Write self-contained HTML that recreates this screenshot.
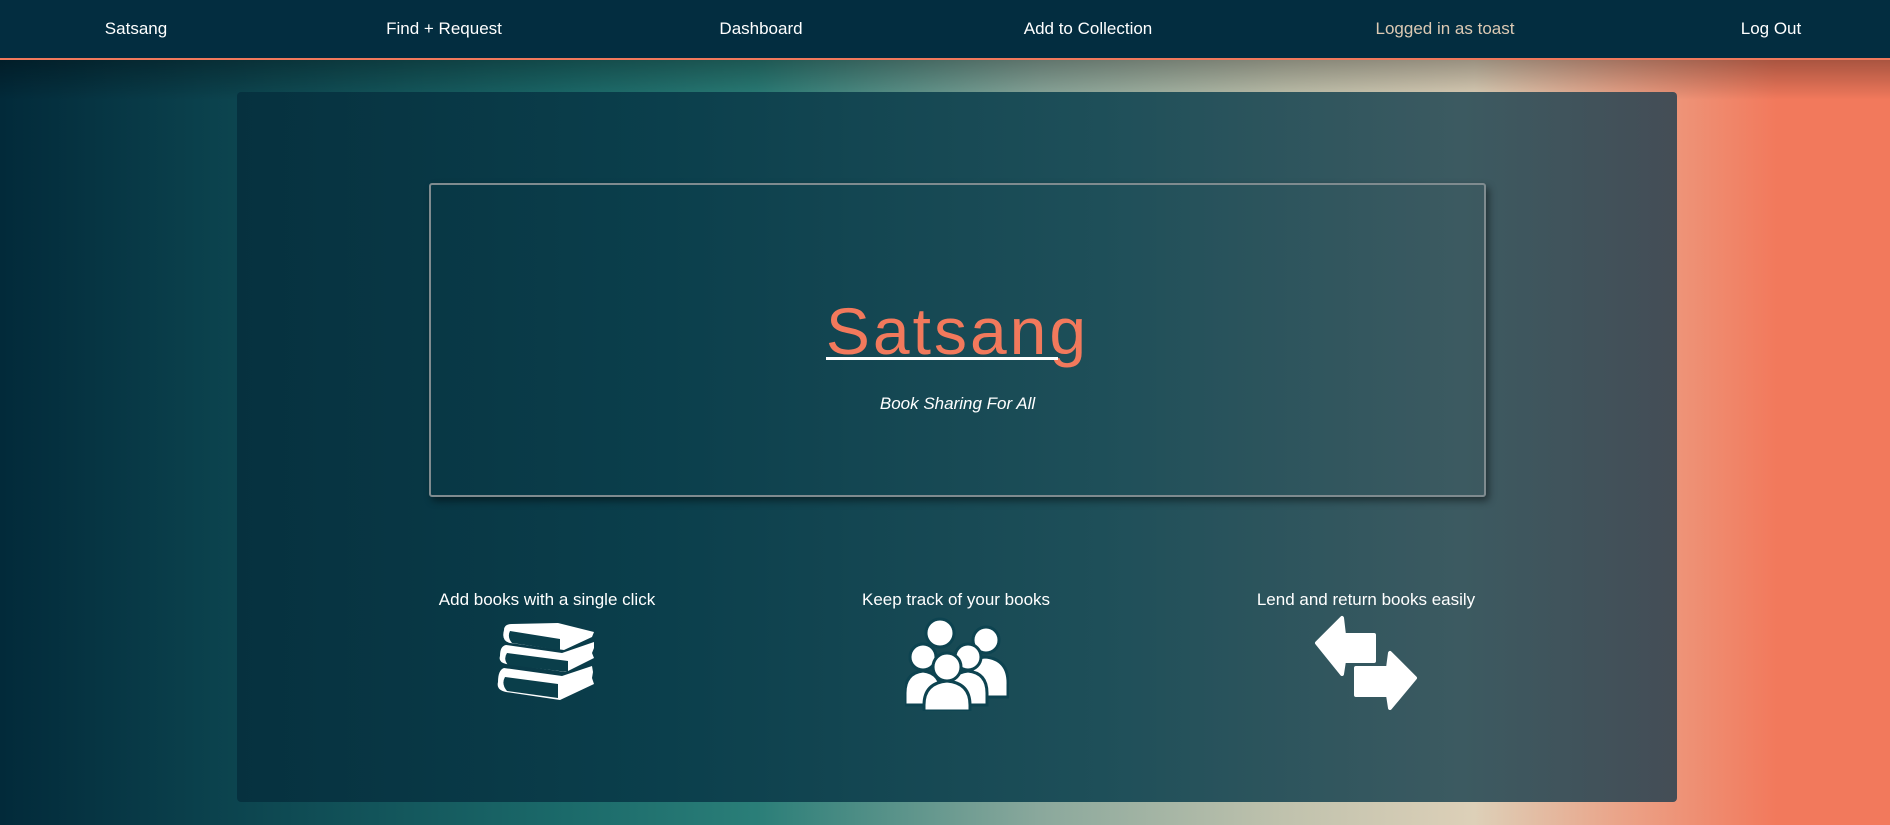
<!DOCTYPE html>
<html><head><meta charset="utf-8"><style>
*{margin:0;padding:0;box-sizing:border-box}
body{width:1890px;height:825px;overflow:hidden;font-family:"Liberation Sans",sans-serif;position:relative;
background:linear-gradient(to right,#022a3a 0%,#0a3f4b 10%,#1b6a6a 30%,#2a7e78 40%,#8aa89c 55%,#c0c2ad 68%,#ddd0b8 78%,#eba287 86%,#f2795c 94%,#f2795c 100%);}
.shade{position:absolute;left:0;top:60px;width:1890px;height:40px;background:linear-gradient(to bottom,rgba(0,0,0,.3),rgba(0,0,0,0));}
nav{position:absolute;left:0;top:0;width:1890px;background:#032d40;border-bottom:2px solid #f2795c;height:60px}
nav span{position:absolute;top:19px;font-size:17px;color:#fff;transform:translateX(-50%);white-space:nowrap}
.panel{position:absolute;left:237px;top:92px;width:1440px;height:710px;border-radius:4px;
background:linear-gradient(to right,#06313f 0%,#0b3f4c 30%,#1e4f59 60%,#3c5a61 85%,#444d56 100%);}
.box{position:absolute;left:192px;top:91px;width:1057px;height:314px;border:2px solid #7f8b8f;border-radius:3px;box-shadow:3px 4px 8px rgba(0,0,0,.45)}
.title{position:absolute;left:0;right:0;top:108px;text-align:center;font-size:66px;line-height:76px;color:#f2795c;letter-spacing:3px}
.title span{display:inline-block;position:relative}
.title span:after{content:"";position:absolute;left:0;width:232px;bottom:9px;height:3px;background:#fff}
.sub{position:absolute;text-align:center;font-style:italic;font-size:17px;color:#fff}
.feat{position:absolute;top:498px;color:#fff;font-size:17px;transform:translateX(-50%);white-space:nowrap}
svg{position:absolute}
</style></head><body>
<div class="shade"></div>
<nav>
<span style="left:136px">Satsang</span>
<span style="left:444px">Find + Request</span>
<span style="left:761px">Dashboard</span>
<span style="left:1088px">Add to Collection</span>
<span style="left:1445px;color:#dcc9b3">Logged in as toast</span>
<span style="left:1771px">Log Out</span>
</nav>
<div class="panel">
<div class="box">
<div class="title"><span>Satsang</span></div>
</div>
<div class="sub" style="left:192px;width:1057px;top:302px">Book Sharing For All</div>
<div class="feat" style="left:310px">Add books with a single click</div>
<div class="feat" style="left:719px">Keep track of your books</div>
<div class="feat" style="left:1129px">Lend and return books easily</div>
</div>
<!-- books -->
<svg style="left:496px;top:620px" width="104" height="86" viewBox="0 0 104 86">
<g fill="#fff">
<path d="M8,10 Q8,4 16,4 L62,3 L98,12 L96,17 L68,30 L14,23 Q5,21 8,10Z"/>
<path d="M4,36 Q4,26 10,25 L66,33 L98,22 L98,28 L96,33 L98,38 L70,52 L10,44 Q2,42 4,36Z"/>
<path d="M2,62 Q2,50 8,48 L66,56 L96,46 L97,52 L96,58 L98,64 L64,80 L10,72 Q0,70 2,62Z"/>
</g>
<g fill="#0a3e4a">
<path d="M14,11 L64,19 L64,30 L16,23 Q11,17 14,11Z"/>
<path d="M11,33 L72,41 L72,52 L12,45 Q7,39 11,33Z"/>
<path d="M9,57 L62,64 L62,78 L11,71 Q5,64 9,57Z"/>
</g>
</svg>
<!-- people -->
<svg style="left:905px;top:615px" width="104" height="96" viewBox="0 0 104 96">
<g fill="#fff" stroke="#0d4350" stroke-width="3">
<circle cx="81" cy="25" r="13"/>
<path d="M56,70 Q56,44 80,42 Q104,44 103,70 L103,82 L56,82Z"/>
<circle cx="35" cy="18" r="14"/>
<circle cx="18" cy="42" r="13"/>
<path d="M0,78 Q0,58 18,56 Q36,58 36,78 L36,90 L0,90Z"/>
<circle cx="63" cy="42" r="13"/>
<path d="M44,78 Q44,58 63,56 Q82,58 82,78 L82,90 L44,90Z"/>
<circle cx="42" cy="52" r="14"/>
<path d="M19,90 Q19,68 42,66 Q65,68 65,90 L65,96 L19,96Z"/>
</g>
</svg>
<!-- arrows -->
<svg style="left:1314px;top:615px" width="104" height="96" viewBox="0 0 104 96">
<g fill="#fff" stroke="#fff" stroke-width="4" stroke-linejoin="round">
<path d="M3,28 L28,3 L30,20 L60,20 L60,46 L30,46 L28,59Z"/>
<path d="M101,63 L76,38 L74,53 L42,53 L42,80 L74,80 L76,93Z"/>
</g>
</svg>
</body></html>
